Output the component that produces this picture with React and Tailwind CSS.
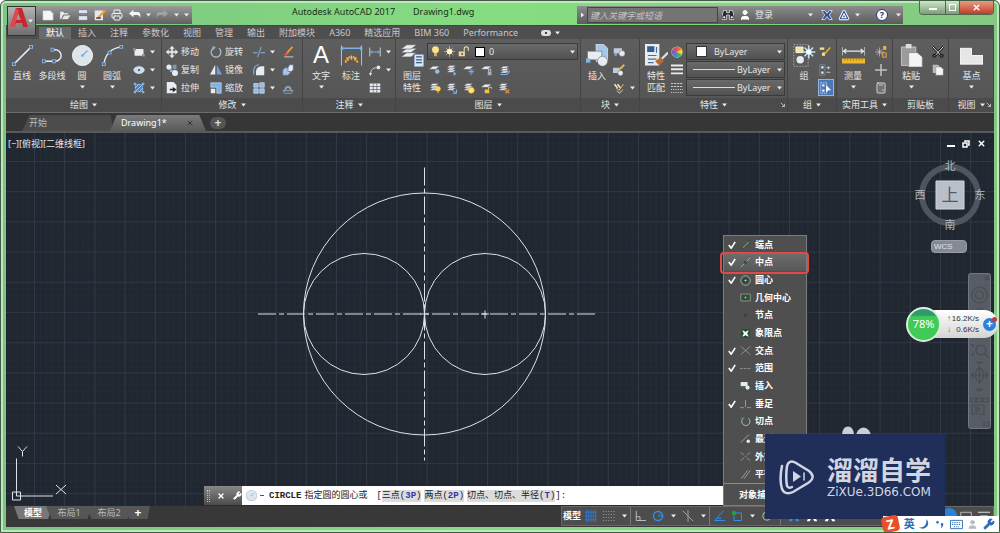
// src/App.jsx
import { Calculator, Printer, User, Wrench, X } from "lucide-react";

const RIBBON_TABS = [
  "默认", "插入", "注释", "参数化", "视图", "管理", "输出", "附加模块",
  "A360", "精选应用", "BIM 360", "Performance",
];

const SNAPS = [
  { label: "端点", icon: "end", on: true },
  { label: "中点", icon: "mid", on: true, hot: true },
  { label: "圆心", icon: "center", on: true },
  { label: "几何中心", icon: "geo" },
  { label: "节点", icon: "node" },
  { label: "象限点", icon: "quad" },
  { label: "交点", icon: "cross", on: true },
  { label: "范围", icon: "ext", on: true },
  { label: "插入", icon: "ins" },
  { label: "垂足", icon: "perp", on: true },
  { label: "切点", icon: "tan" },
  { label: "最近点", icon: "near" },
  { label: "外观交点", icon: "app" },
  { label: "平行线", icon: "par" },
];

const W = "#e8ecf0";
const B = "#7fb2ea";

// small white/blue sheet stack used by most of the layer icons
const sheets = (
  <g fill={W} stroke="#4a5058" strokeWidth=".5">
    <path d="M1 11l4-3h8l-4 3z" />
    <path d="M1 8l4-3h8L9 8z" />
    <path d="M1 5l4-3h8L9 5z" />
  </g>
);
const sheet = <path d="M0 7l5-4h9L9 7z" fill={W} stroke="#4a5058" strokeWidth=".5" />;

const glyphs = {
  // draw
  line: (
    <>
      <path d="M2 14L14 2" stroke={W} fill="none" />
      <path d="M1 13h2v2H1zM13 1h2v2h-2z" fill="#555" stroke={B} strokeWidth=".7" />
    </>
  ),
  pline: (
    <>
      <path d="M2 12h8a4 4 0 000-8H8" stroke={W} fill="none" />
      <path d="M1 11h2v2H1zM8 11h2v2H8zM7 3h2v2H7z" fill="#555" stroke={B} strokeWidth=".7" />
    </>
  ),
  circle: (
    <>
      <circle cx="8" cy="8" r="7" fill="#dfe4ea" stroke="#fff" strokeWidth=".6" />
      <path d="M8 8l3.500-3.500" stroke={B} />
      <circle cx="8" cy="8" r="1" fill={B} />
    </>
  ),
  arc: (
    <>
      <path d="M2 14C3 7 7 3 14 2" stroke={W} fill="none" />
      <path d="M1 13h2v2H1zM5 5h2v2H5zM13 1h2v2h-2z" fill="#555" stroke={B} strokeWidth=".7" />
    </>
  ),
  rect: (
    <>
      <rect x="2" y="4" width="12" height="9" rx="1" fill={W} />
      <path d="M0 3h4v3H0zM12 11h4v3h-4z" fill="#8a919b" />
    </>
  ),
  ellipse: (
    <>
      <ellipse cx="8" cy="8" rx="7" ry="4.500" fill="#cfdbea" stroke={W} />
      <circle cx="8" cy="8" r="1.500" fill="#2f5e9a" />
      <path d="M7 2h2v2H7zM0 7h2v2H0z" fill={B} />
    </>
  ),
  hatch: (
    <>
      <rect x="3" y="3" width="10" height="10" fill="#4d7fc0" stroke={B} />
      <path d="M3 8l5-5M3 13L13 3M8 13l5-5" stroke="#dbe8f7" />
      <path d="M1 1h3v3H1zM12 1h3v3h-3zM1 12h3v3H1zM12 12h3v3h-3z" fill={B} />
    </>
  ),
  // modify
  move: (
    <path
      d="M8 0l3 3.500H9V7h3.500V5L16 8l-3.500 3V9H9v3.500h2L8 16l-3-3.500h2V9H3.500v2L0 8l3.500-3v2H7V3.500H5z"
      fill={W}
      stroke={W}
      strokeWidth=".5"
    />
  ),
  rotate: (
    <>
      <path d="M5 2.500a6.500 6.500 0 107 .6" stroke="#aeb9c6" strokeWidth="1.800" fill="none" />
      <path d="M3 0l5 1.500-4 4z" fill={B} />
    </>
  ),
  trim: (
    <>
      <path d="M0 9h6M10 9h6" stroke={B} strokeWidth="1.500" />
      <path d="M11 1L6 15" stroke="#8fb0d8" strokeWidth="1.300" />
    </>
  ),
  erase: (
    <>
      <path d="M14 1L6 10" stroke="#f0a030" strokeWidth="2.500" />
      <path d="M7 8l-4 3 1 2 5-2z" fill="#e55" />
      <path d="M3 14.500h12" stroke={W} />
    </>
  ),
  copy: (
    <>
      <circle cx="4" cy="4" r="3.500" fill={W} />
      <path d="M9 1h5v6H9z" fill="#8296ad" />
      <circle cx="7" cy="9" r="2" fill={B} />
      <circle cx="12" cy="12" r="4" fill={W} />
    </>
  ),
  mirror: (
    <>
      <path d="M7 1v13H0z" fill={W} />
      <path d="M9 1v13h7z" fill="#6f9fd6" />
    </>
  ),
  fillet: (
    <>
      <path d="M4 15V10a7 7 0 017-7h4v12z" fill={W} />
      <path d="M1 14V8a7 7 0 017-7" stroke={B} strokeWidth="1.500" fill="none" />
    </>
  ),
  explode: (
    <>
      <path d="M1 8l3-3h7v7l-3 3H1z" fill="#a9c4e4" stroke="#54708f" />
      <path d="M8 5l2-4h5v6l-2 3H8z" fill={W} stroke="#54708f" />
    </>
  ),
  stretch: (
    <>
      <path d="M1 0h9l4 4v11H1z" fill={W} />
      <path d="M5 9h4V6.500L14 10l-5 3.500V11H5z" fill="#222" />
    </>
  ),
  scale: (
    <>
      <path d="M1 1h14v14H9V7H1z" fill={B} stroke={W} strokeWidth=".7" />
      <path d="M1 9h6v6H1z" fill={W} />
    </>
  ),
  array: (
    <path
      d="M1 2h6v5H1zM9 1h6v6H9zM1 9h6v6H1zM9 9h6v6H9z"
      fill="#8dbbf0"
      stroke={W}
      strokeWidth=".8"
    />
  ),
  offset: (
    <>
      <path d="M1 12h3v-2a4 4 0 118 0v2h3" stroke="#b4c4d8" strokeWidth="1.300" fill="none" />
      <path d="M2 15h12M6 12V9a2 2 0 014 0v3z" stroke={B} fill="none" />
    </>
  ),
  // annotate
  dim: (
    <>
      <path d="M1 1v14M15 1v14" stroke="#b9c0c8" strokeWidth=".7" />
      <path d="M1 3h14" stroke={B} />
      <path d="M2 1.500L0 3l2 1.500zM14 1.500L16 3l-2 1.500z" fill={B} />
      <path d="M4 13a4 4 0 018 0" stroke="#f0a030" strokeWidth="1.500" strokeDasharray="2 1.500" fill="none" />
      <path d="M8 8v3M4.500 9.500l1.500 2M11.500 9.500l-1.500 2" stroke="#f0c060" />
    </>
  ),
  linear: (
    <>
      <path d="M1 2v12M15 2v12" stroke={W} />
      <path d="M2 8h12M4 6L2 8l2 2M12 6l2 2-2 2" stroke={B} strokeWidth="1.300" fill="none" />
    </>
  ),
  leader: (
    <>
      <path d="M2 15c0-7 3-10 8-10" stroke={W} fill="none" />
      <circle cx="12.500" cy="4.500" r="2.500" fill={W} />
      <path d="M0 12l2 4 2-4z" fill={W} />
    </>
  ),
  table: (
    <>
      <path d="M1 2h14v12H1z" fill={W} />
      <path d="M1 6h14M1 10h14M5.700 2v12M10.400 2v12" stroke="#5d6670" />
    </>
  ),
  // layers
  layerprops: (
    <>
      <g fill={W} stroke="#555" strokeWidth=".4">
        <path d="M0 9l4-3h7l-4 3z" />
        <path d="M0 6l4-3h7L7 6z" />
        <path d="M0 3.500l4-3h7l-4 3z" />
      </g>
      <path d="M9 7h7v9H9z" fill="#d9e6f5" stroke="#39577c" strokeWidth=".6" />
      <path d="M10.500 9h4M10.500 11h4M10.500 13h4" stroke="#39577c" strokeWidth=".8" />
    </>
  ),
  layoff: <>{sheet}<circle cx="11" cy="10" r="3" fill="#9dbbe0" /></>,
  layiso: <>{sheets}<path d="M10 10l4 3-4 3z" fill={B} /></>,
  layfrz: <>{sheet}<path d="M11 6v9M7 10h8M8 7l6 6M14 7l-6 6" stroke={B} /></>,
  laylck: <>{sheet}<path d="M9 10h5v5H9z" fill="#9fb0c4" /><path d="M10 10V7h3v3" stroke={W} fill="none" /></>,
  laycur: <g transform="translate(2 1)">{sheets}<path d="M1 13h9l4-5" stroke={B} strokeWidth="1.500" fill="none" /></g>,
  layon: <>{sheets}<circle cx="12" cy="9" r="3.500" fill="#ffd257" /><path d="M11 12h2v3h-2z" fill="#c79a3a" /></>,
  layun: <>{sheets}<path d="M7 10l7 5M14 10v5H9" stroke={B} strokeWidth="1.300" fill="none" /></>,
  laythw: <>{sheets}<circle cx="11" cy="11" r="4" fill="#ffe27a" stroke="#e0a820" /></>,
  layulk: <>{sheet}<path d="M5 10h6v5H5z" fill="#f2c14a" /><path d="M10 10V7h4v2" stroke="#f2c14a" strokeWidth="1.300" fill="none" /></>,
  laymch: <>{sheets}<path d="M9 10l6 5M15 10l-5 5" stroke="#e08a3a" strokeWidth="2" /></>,
  bulb: <><circle cx="8" cy="5.500" r="5" fill="#ffe08a" /><path d="M6 10h4v5H6z" fill="#d7b25a" /></>,
  sun: (
    <>
      <path d="M8 0v16M0 8h16M2.500 2.500l11 11M13.500 2.500l-11 11" stroke="#d6c9a0" />
      <circle cx="8" cy="8" r="4" fill="#fff3c0" />
    </>
  ),
  unlock: (
    <>
      <path d="M1 8h9v7H1z" fill="#f3d890" />
      <path d="M9 8V4a3 3 0 016 0v3" stroke="#e8e0c8" strokeWidth="1.500" fill="none" />
      <path d="M5 10h2v3H5z" fill="#443" />
    </>
  ),
  // blocks and properties
  insert: (
    <>
      <path d="M7 0h5l3 3v9H7z" fill="#a8c6e8" stroke={W} strokeWidth=".5" />
      <path d="M1 5h10v6H1z" fill={W} stroke="#667" strokeWidth=".4" />
      <circle cx="11.500" cy="12" r="3.500" fill={W} stroke="#667" strokeWidth=".4" />
      <path d="M0 10h3v3H0z" fill={B} />
    </>
  ),
  mkblock: (
    <>
      <path d="M1 3h11v7H1z" fill="#c2ccd8" />
      <circle cx="12" cy="10" r="4" fill={W} stroke="#556" strokeWidth=".6" />
      <path d="M2 10h3v3H2z" fill={B} />
    </>
  ),
  edblock: (
    <>
      <path d="M0 5h9v7H0z" fill="#c2ccd8" />
      <circle cx="10" cy="12" r="3.500" fill={W} stroke="#556" strokeWidth=".6" />
      <path d="M15 1L9 7" stroke="#f0b030" strokeWidth="2.500" />
    </>
  ),
  attr: (
    <>
      <path d="M2 3l4 5M6 3l4 5" stroke={W} strokeWidth="2" />
      <path d="M14 3l-6 8-4-3" stroke="#e6a84a" strokeWidth="1.500" fill="none" />
      <path d="M5 12l4 3 4-5" stroke={W} fill="none" />
    </>
  ),
  match: (
    <>
      <path d="M0 0h10v15H0z" fill={W} />
      <path d="M1.500 1.500h5v4h-5z" fill="#2f5e9a" />
      <path d="M2 8h6M2 10.500h6M2 13h4M8 2v4" stroke="#4b6b93" strokeWidth=".8" />
      <path d="M16 6l-5 5" stroke="#ddd" strokeWidth="1.500" />
      <path d="M11 9l2 3-3 3-3-3z" fill="#b8692c" />
    </>
  ),
  wheel: (
    <>
      <circle cx="8" cy="8" r="7.500" fill="#f0d24a" />
      <path d="M8 8V1a7 7 0 016 3.500z" fill="#e86a3a" />
      <path d="M8 8L2 4.500A7 7 0 018 1z" fill="#d84a6a" />
      <path d="M8 8v7a7 7 0 01-6-3.500z" fill="#3a86d8" />
      <path d="M8 8l6 3.500A7 7 0 018 15z" fill="#43b05c" />
      <path d="M8 8L2 11.500a7 7 0 010-7z" fill="#7a58c8" />
    </>
  ),
  weights: <path d="M0 2h16M0 7h16M0 12.500h16" stroke={W} strokeWidth="2.500" />,
  ltypes: (
    <>
      <path d="M0 2h16M0 6h16" stroke={W} strokeDasharray="3 1" />
      <path d="M0 10h16M0 14h16" stroke={W} strokeDasharray="1.500 1.500" />
    </>
  ),
  // groups, utilities, clipboard
  group: (
    <>
      <path d="M.5 .5h10v15H.5z" stroke="#b8b8b8" strokeDasharray="1 1" strokeWidth=".6" fill="none" />
      <path d="M2 2h5v4H2z" fill="#f4e6a0" stroke="#fff" strokeWidth=".5" />
      <circle cx="5" cy="11" r="2.600" fill={W} />
      <path d="M11 1v9M6.500 5.500h9M8 2.500l6 6M14 2.500l-6 6" stroke="#c4e6ff" strokeWidth="1" />
      <circle cx="11" cy="5.500" r="1.800" fill="#fff" />
    </>
  ),
  ungroup: (
    <>
      <path d="M1 2h6v3H1zM4 9h4v4H4z" fill="#f4e6a0" />
      <path d="M15 2l-7 8-2-2" stroke="#f0b030" strokeWidth="2" fill="none" />
    </>
  ),
  grpedit: (
    <>
      <path d="M1 1h7v14H1z" stroke="#7a9cc8" fill="none" strokeWidth=".8" />
      <path d="M3 3h3v3H3zM3 10h3v3H3z" fill={W} />
      <path d="M10 5h5M10 11h5M12.500 3v4" stroke={W} />
    </>
  ),
  grpsel: (
    <>
      <path d="M1 1h8v14H1z" stroke="#cfe0f5" fill="none" strokeDasharray="2 1" />
      <path d="M3 3h3v3H3zM3 10h3v3H3z" fill={W} />
      <path d="M8 4l7 7h-4l-3 3z" fill="#fff" />
    </>
  ),
  measure: (
    <>
      <path d="M0 2v6M16 2v6" stroke={W} strokeWidth=".8" />
      <path d="M1 5h14M3 3.500L1 5l2 1.500M13 3.500L15 5l-2 1.500" stroke={W} strokeWidth=".8" fill="none" />
      <path d="M0 10h16v3.500H0z" fill="#f0b92c" />
      <path d="M2 10v1.500M4 10v1.500M6 10v1.500M8 10v1.500M10 10v1.500M12 10v1.500M14 10v1.500" stroke="#8a6410" strokeWidth=".5" />
    </>
  ),
  qselect: (
    <>
      <path d="M6 2v12M0 8h12M2 4l8 8M10 4l-8 8" stroke="#d9d9d9" strokeWidth=".8" />
      <path d="M11 0h4v5h-4z" fill="#f0b94a" />
      <path d="M10 9h5v6h-5z" stroke="#f0b94a" fill="#776a50" />
    </>
  ),
  point: <path d="M8 0v16M0 8h16" stroke="#bcc4cc" strokeWidth="2" />,
  paste: (
    <>
      <path d="M1 2h10v13H1z" fill="#9b9b9b" stroke="#ddd" strokeWidth=".5" />
      <path d="M4 0h4v3H4z" fill="#ddd" />
      <path d="M6 6h6l3.500 3v7H6z" fill="#f4f4f4" stroke="#777" strokeWidth=".4" />
    </>
  ),
  cut: (
    <>
      <path d="M1 1l12 13M15 1L3 14" stroke="#111" strokeWidth="3" />
      <path d="M1 1l12 13M15 1L3 14" stroke="#eee" strokeWidth="1.300" />
      <circle cx="3" cy="13" r="2" stroke="#111" fill="none" strokeWidth="1.300" />
      <circle cx="13" cy="13" r="2" stroke="#111" fill="none" strokeWidth="1.300" />
    </>
  ),
  copyclip: (
    <>
      <path d="M1 1h7l2 2v9H1z" fill="#bbb" />
      <path d="M5 4h7l3 3v8H5z" fill="#f4f4f4" stroke="#666" strokeWidth=".5" />
    </>
  ),
  base: <path d="M0 3h8v5h8v6H0z" fill="#e6e6e6" stroke="#fff" strokeWidth=".6" />,
  // quick access
  new: <path d="M1 2h10l4 4v9H1z" fill="#f4f6f8" stroke="#888" strokeWidth=".5" />,
  open: <path d="M1 14V3h5l1 2h6v3H6l-3 6zM3 14l4-6h9l-4 6z" fill="#e8e8e8" stroke="#555" strokeWidth=".6" />,
  save: <path d="M2 1h12v5H2zM2 9h12v6H2zM4 7h8v1H4z" fill="#dfe6ee" stroke="#445" strokeWidth=".5" />,
  saveas: (
    <>
      <path d="M1 2h11v13H1z" fill="#e4e8ee" />
      <path d="M15 2L6 11" stroke="#f0a030" strokeWidth="3" />
      <path d="M3 11h6v2H3z" fill="#335" />
    </>
  ),
  undo: <path d="M0 6l6-5v3h5c3 0 5 2 4 8-1-3-2-4-4-4H6v3z" fill="#f4f4f4" />,
  redo: <path d="M16 6l-6-5v3H5c-3 0-5 2-4 8 1-3 2-4 4-4h5v3z" fill="#a2a2a2" />,
  binoc: (
    <>
      <path d="M2 2h4v3h4V2h4l2 8v4h-6V8H6v6H0v-4z" fill="#24282e" stroke="#fff" strokeWidth=".8" />
      <circle cx="3" cy="11" r="1.500" fill="#fff" />
      <circle cx="13" cy="11" r="1.500" fill="#fff" />
    </>
  ),
  exchange: <path d="M1 2h4l3 4 3-4h4l-4 6 4 6h-4l-3-4-3 4H1l4-6z" fill="#2c4fa0" stroke="#fff" strokeWidth=".9" />,
  a360: (
    <>
      <path d="M8 3l5 10H3z" stroke="#fff" strokeWidth="4" strokeLinejoin="round" />
      <path d="M8 3l5 10H3z" stroke="#2c4fa0" strokeWidth="1.500" />
    </>
  ),
  // object snap menu
  end: <><path d="M4 13L14 3" stroke="#b5c5b8" /><path d="M1 12h3v3H1zM12 1h3v3h-3z" fill="#1f5a30" /></>,
  mid: <><path d="M1 15L15 1" stroke="#b5c5b8" /><path d="M6 6h4v4H6z" fill="#1f5a30" /></>,
  center: (
    <>
      <circle cx="8" cy="8" r="7" stroke="#c0c6ba" fill="none" />
      <circle cx="8" cy="8" r="4" fill="#1f4a2c" />
      <path d="M6 8h4M8 6v4" stroke="#d8e8d8" strokeWidth=".8" />
    </>
  ),
  geo: (
    <>
      <path d="M1 3h14v10H1z" stroke="#9fb0a0" fill="#3d4a40" />
      <circle cx="8" cy="8" r="3" fill="#16502a" />
      <path d="M8 6v4M6 8h4" stroke="#b8d8b8" strokeWidth=".8" />
    </>
  ),
  node: <circle cx="8" cy="8" r="1.800" fill="#2e5a3c" stroke="#1e4028" />,
  quad: (
    <>
      <path d="M2 2h12v12H2z" fill="#1c4a2c" />
      <path d="M4 4l4 2 4-2-2 4 2 4-4-2-4 2 2-4z" fill="#fff" stroke="#fff" />
    </>
  ),
  cross: <path d="M1 2l14 12M15 2L1 14" stroke="#9fb5a2" />,
  ext: <path d="M0 8h16" stroke="#9fb5a2" strokeDasharray="4 1.500" />,
  ins: <><path d="M1 3h10v6H1z" fill={W} /><circle cx="11" cy="11" r="3" fill={W} /><path d="M3 9h3v3H3z" fill="#2e7a44" /></>,
  perp: <><path d="M0 14h6M10 14h6" stroke="#5cc074" strokeWidth="1.300" /><path d="M8 3v10" stroke="#b5c5b8" /></>,
  tan: <><path d="M5 3a6 6 0 107 0" stroke="#b5c5b8" strokeWidth="1.300" fill="none" /><path d="M1 3h6" stroke="#4ca862" /></>,
  near: <><path d="M1 14L13 2" stroke="#b5c5b8" /><circle cx="12" cy="12" r="2.500" fill={W} /></>,
  app: <><path d="M1 2l5 4M15 2l-5 4M1 14l5-4M15 14l-5-4" stroke="#9fb5a2" /><path d="M7 7h2v2H7z" fill="#4ca862" /></>,
  par: <path d="M2 14L11 2M6 14l9-12" stroke="#b5c5b8" />,
  // status bar
  grid: <path d="M2 0v16M5 0v16M8 0v16M11 0v16M14 0v16M0 3h16M0 8h16M0 13h16" stroke="#2f7fe0" />,
  dots: <path d="M0 2h16M0 6h16M0 10h16M0 14h16" stroke="#aaa" strokeDasharray="1.500 2" />,
  ortho: <path d="M3 1v13h13M3 9h5v5" stroke="#ddd" fill="none" />,
  polar: <><circle cx="8" cy="8" r="6" stroke="#2f8ff0" strokeWidth="1.800" fill="none" /><path d="M8 8h8M8 8l5-5" stroke="#2f8ff0" /></>,
  iso: <path d="M1 1l14 14M8 0v16" stroke="#bbb" />,
  track: <path d="M14 1L2 14h14M5 11h6" stroke="#2f8ff0" strokeWidth="1.300" fill="none" />,
  osnap: <><path d="M4 4h10v10H4z" stroke="#2f8ff0" strokeWidth="1.300" fill="none" /><circle cx="4" cy="4" r="3" fill="#2a9a4a" /></>,
  gear: <><circle cx="8" cy="8" r="5.500" stroke="#a7b49a" strokeWidth="1.500" fill="none" /><circle cx="8" cy="8" r="1.500" fill="#a7b49a" /></>,
  person: <path d="M8 1l3 6 4 8h-4L8 9l-3 6H1l4-8z" fill="currentColor" />,
  panel: <><path d="M1 3h14v10H1z" stroke="#ddd" fill="none" /><path d="M9 8h5v4H9z" fill="#ddd" /></>,
  lines: <path d="M0 3h16M3 8h10M3 12h10" stroke="#ddd" strokeWidth="1.500" />,
  expand: <path d="M2 2l9 9M12 5v7H5" stroke="#ddd" strokeWidth="2" fill="none" />,
};

function Glyph({ name, className = "size-3" }) {
  return (
    <svg viewBox="0 0 16 16" className={`shrink-0 ${className}`} fill="none" aria-hidden="true">
      {glyphs[name]}
    </svg>
  );
}

function Caret({ className = "" }) {
  return (
    <svg viewBox="0 0 8 5" className={`h-1 w-[5px] shrink-0 ${className}`} aria-hidden="true">
      <path d="M0 0h8L4 5z" fill="#eee" />
    </svg>
  );
}

function Panel({ title, className, children, caret = true, launcher = false }) {
  return (
    <section className={`flex flex-col border-r border-[#444] ${className}`}>
      <div className="flex flex-1 pl-px">{children}</div>
      <h2 className="relative flex h-[14px] items-center justify-center gap-1 bg-[#4b4b4b] whitespace-nowrap">
        {title}
        {caret && <Caret />}
        {launcher && <Glyph name="expand" className="absolute right-px size-[6px]" />}
      </h2>
    </section>
  );
}

function BigButton({ icon, label, sub, caret, children }) {
  return (
    <button type="button" className="flex w-[30px] shrink-0 flex-col items-center pt-[5px] leading-3 whitespace-nowrap">
      {children || <Glyph name={icon} className="size-[23px]" />}
      <span className="mt-[3px]">{label}</span>
      {sub && <span>{sub}</span>}
      {caret && <Caret className="mt-[3px]" />}
    </button>
  );
}

function SmallButton({ icon, label, caret, active }) {
  return (
    <button
      type="button"
      title={label || icon}
      className={`flex h-[17px] items-center gap-[3px] whitespace-nowrap ${active ? "-ml-px border border-[#8fb5e8] bg-[#4a78b8] px-px" : ""}`}
    >
      <Glyph name={icon} />
      {label}
      {caret && <Caret className="ml-[2px]" />}
    </button>
  );
}

function Stack({ items, className = "" }) {
  return (
    <div className={`flex flex-col gap-px pt-1 ${className}`}>
      {items.map((it) => (
        <SmallButton key={it.icon} {...it} />
      ))}
    </div>
  );
}

function Combo({ label, options, className = "", children }) {
  return (
    <label className="relative flex h-[17px] items-center border border-[#3a3a3a] bg-linear-to-b from-[#6a6a6a] to-[#525252]">
      <span className="sr-only">{label}</span>
      {children}
      <select className={`h-[15px] min-w-0 flex-1 appearance-none bg-transparent pr-2 leading-[15px] outline-none ${className}`}>
        {options.map((o) => (
          <option key={o}>{o}</option>
        ))}
      </select>
      <Caret className="absolute right-[2px]" />
    </label>
  );
}

function TitleBar() {
  return (
    <header className="flex h-6 shrink-0 items-start pl-[30px]">
      <nav className="mt-[5px] flex h-[18px] w-[156px] items-center justify-between bg-linear-to-b from-[#9a9a9a] to-[#616161] pr-[3px] pl-[6px]">
        <button type="button" aria-label="新建"><Glyph name="new" /></button>
        <button type="button" aria-label="打开"><Glyph name="open" /></button>
        <button type="button" aria-label="保存"><Glyph name="save" /></button>
        <button type="button" aria-label="另存为"><Glyph name="saveas" /></button>
        <button type="button" aria-label="打印"><Printer size={12} color="#f4f4f4" /></button>
        <button type="button" aria-label="放弃"><Glyph name="undo" /></button>
        <Caret />
        <button type="button" aria-label="重做"><Glyph name="redo" /></button>
        <Caret />
        <Caret />
      </nav>
      <h1 className="flex h-[22px] flex-1 items-center gap-[18px] pl-[100px] whitespace-nowrap text-[#173017]">
        <span>Autodesk AutoCAD 2017</span>
        <span>Drawing1.dwg</span>
      </h1>
      <div className="mt-[5px] mr-4 flex h-[18px] w-[326px] items-center bg-linear-to-b from-[#8c8c8c] to-[#5c5c5c]">
        <button type="button" aria-label="展开" className="flex w-[10px] justify-center">
          <Caret className="-rotate-90" />
        </button>
        <input
          type="text"
          aria-label="搜索"
          placeholder="键入关键字或短语"
          className="h-4 w-[131px] border border-[#444] bg-[#747474] px-[2px] italic outline-none placeholder:text-[#c4c4c4]"
        />
        <button type="button" aria-label="查找" className="ml-1"><Glyph name="binoc" /></button>
        <button type="button" className="ml-[5px] flex items-center gap-1">
          <User size={12} fill="#fff" color="#fff" />
          登录
        </button>
        <Caret className="ml-auto" />
        <button type="button" aria-label="Exchange" className="ml-2"><Glyph name="exchange" /></button>
        <button type="button" aria-label="A360" className="mx-[5px]"><Glyph name="a360" /></button>
        <Caret />
        <button
          type="button"
          aria-label="帮助"
          className="mr-2 ml-4 size-3 rounded-full border border-[#223a70] bg-white text-center leading-[10px] font-bold text-[#223a70]"
        >
          ?
        </button>
        <Caret className="mr-[2px]" />
      </div>
      <div className="flex h-[14px] w-[75px] overflow-hidden rounded-b border border-t-0 border-[#4d6a4d] text-white">
        <button type="button" aria-label="最小化" className="flex w-[26px] items-end justify-center border-r border-[#4d6a4d] bg-linear-to-b from-[#cfe6cb] to-[#7d9c7a] pb-1">
          <span className="h-[2px] w-2 bg-white" />
        </button>
        <button type="button" aria-label="还原" className="flex w-[14px] items-center justify-center border-r border-[#4d6a4d] bg-linear-to-b from-[#cfe6cb] to-[#7d9c7a]">
          <span className="size-[7px] border border-white" />
        </button>
        <button type="button" aria-label="关闭" className="flex flex-1 items-center justify-center bg-linear-to-b from-[#e59a86] to-[#bf3a22]">
          <X size={9} strokeWidth={4} />
        </button>
      </div>
    </header>
  );
}

function Ribbon() {
  return (
    <div className="flex h-[74px] shrink-0 border-b border-[#6c6c6c] bg-linear-to-b from-[#5e5e5e] to-[#545454]">
      <Panel title="绘图" className="w-[156px]">
        <BigButton icon="line" label="直线" />
        <BigButton icon="pline" label="多段线" />
        <BigButton icon="circle" label="圆" caret />
        <BigButton icon="arc" label="圆弧" caret />
        <Stack
          className="pl-[6px]"
          items={[
            { icon: "rect", caret: true },
            { icon: "ellipse", caret: true },
            { icon: "hatch", caret: true },
          ]}
        />
      </Panel>
      <Panel title="修改" className="w-[141px]">
        <Stack
          className="w-[44px] pl-[3px]"
          items={[
            { icon: "move", label: "移动" },
            { icon: "copy", label: "复制" },
            { icon: "stretch", label: "拉伸" },
          ]}
        />
        <Stack
          className="w-[44px] pl-[3px]"
          items={[
            { icon: "rotate", label: "旋转" },
            { icon: "mirror", label: "镜像" },
            { icon: "scale", label: "缩放" },
          ]}
        />
        <Stack
          className="w-[30px] pl-[2px]"
          items={[
            { icon: "trim", caret: true },
            { icon: "fillet", caret: true },
            { icon: "array", caret: true },
          ]}
        />
        <Stack className="pl-px" items={[{ icon: "erase" }, { icon: "explode" }, { icon: "offset" }]} />
      </Panel>
      <Panel title="注释" className="w-[93px]">
        <span className="w-[2px]" />
        <BigButton label="文字" caret>
          <span className="h-[23px] font-['Liberation_Sans',sans-serif] text-[24px] leading-[22px] text-white">A</span>
        </BigButton>
        <BigButton icon="dim" label="标注" />
        <Stack
          className="pl-[3px]"
          items={[{ icon: "linear", caret: true }, { icon: "leader", caret: true }, { icon: "table" }]}
        />
      </Panel>
      <Panel title="图层" className="w-[185px]">
        <BigButton icon="layerprops" label="图层" sub="特性" />
        <div className="flex flex-1 flex-col gap-px pt-1 pr-[2px]">
          <Combo label="当前图层" options={["0"]} className="pl-1">
            <span className="flex items-center gap-[3px] pl-[2px]">
              <Glyph name="bulb" className="size-[11px]" />
              <Glyph name="sun" className="size-[11px]" />
              <Glyph name="unlock" className="size-[11px]" />
              <span className="ml-[3px] size-[10px] border border-black bg-white" />
            </span>
          </Combo>
          <div className="grid w-[88px] grid-cols-5 gap-y-px pl-[2px]">
            {["layoff", "layiso", "layfrz", "laylck", "laycur", "layon", "layun", "laythw", "layulk", "laymch"].map((n) => (
              <SmallButton key={n} icon={n} />
            ))}
          </div>
        </div>
      </Panel>
      <Panel title="块" className="w-[59px]">
        <BigButton icon="insert" label="插入" />
        <Stack className="pl-px" items={[{ icon: "mkblock" }, { icon: "edblock" }, { icon: "attr", caret: true }]} />
      </Panel>
      <Panel title="特性" className="w-[148px]" launcher>
        <BigButton icon="match" label="特性" sub="匹配" />
        <Stack className="w-[15px]" items={[{ icon: "wheel" }, { icon: "weights" }, { icon: "ltypes" }]} />
        <div className="flex flex-1 flex-col gap-px pt-1 pr-[2px]">
          <Combo label="对象颜色" options={["ByLayer"]} className="pl-[7px]">
            <span className="ml-[9px] size-[11px] border border-[#333] bg-white" />
          </Combo>
          <Combo label="线宽" options={["ByLayer"]} className="pl-[2px]">
            <span className="ml-[6px] h-px w-[42px] bg-[#ddd]" />
          </Combo>
          <Combo label="线型" options={["ByLayer"]} className="pl-[2px]">
            <span className="ml-[6px] h-px w-[42px] bg-[#ddd]" />
          </Combo>
        </div>
      </Panel>
      <Panel title="组" className="w-[49px]">
        <BigButton icon="group" label="组" />
        <Stack items={[{ icon: "ungroup" }, { icon: "grpedit" }, { icon: "grpsel", active: true }]} />
      </Panel>
      <Panel title="实用工具" className="w-[56px]">
        <BigButton icon="measure" label="测量" caret />
        <div className="flex flex-col gap-px pt-1 pl-[7px]">
          <SmallButton icon="qselect" />
          <SmallButton icon="point" />
          <button type="button" aria-label="计算器" className="flex h-[17px] items-center">
            <Calculator size={12} color="#ddd" />
          </button>
        </div>
      </Panel>
      <Panel title="剪贴板" className="w-[56px]" caret={false}>
        <span className="w-[2px]" />
        <BigButton icon="paste" label="粘贴" caret />
        <Stack className="pl-[6px]" items={[{ icon: "cut" }, { icon: "copyclip" }]} />
      </Panel>
      <Panel title="视图" className="flex-1" launcher>
        <div className="flex flex-1 justify-center">
          <BigButton icon="base" label="基点" caret />
        </div>
      </Panel>
    </div>
  );
}

function FileTabs() {
  return (
    <div className="flex h-5 shrink-0 items-end border-b-2 border-[#5a5a5a] bg-[#363636] pl-4 text-[#bbb]">
      <button type="button" className="h-4 w-[92px] bg-[#4c4c4c] pl-[7px] text-left [clip-path:polygon(0_100%,8%_0,96%_0,100%_100%)]">
        开始
      </button>
      <button
        type="button"
        className="-ml-1 flex h-4 w-[96px] items-center justify-between bg-linear-to-b from-[#7a7a7a] to-[#5a5a5a] pr-3 pl-[11px] text-white [clip-path:polygon(0_100%,7%_0,93%_0,100%_100%)]"
      >
        Drawing1*
        <X size={8} strokeWidth={3} color="#333" />
      </button>
      <button type="button" aria-label="新图形" className="mb-[2px] ml-1 h-3 w-4 rounded-md bg-[#555] text-[12px] leading-3 font-bold text-[#ddd]">
        +
      </button>
    </div>
  );
}

function ViewCube() {
  return (
    <svg viewBox="0 0 74 76" className="absolute top-[24px] right-[7px] h-[76px] w-[74px]" fontSize="11" fill="#b4b8be" textAnchor="middle">
      <circle cx="37" cy="38" r="28" stroke="#4e555f" strokeWidth="6" fill="none" />
      <text x="37" y="13">北</text>
      <text x="7" y="42">西</text>
      <text x="67" y="42">东</text>
      <text x="37" y="72">南</text>
      <path d="M23 24h28v28H23z" fill="#b9bec8" stroke="#d3d7de" />
      <text x="37" y="44" fontSize="17" fill="#50586a">上</text>
    </svg>
  );
}

function NavBar() {
  return (
    <svg viewBox="0 0 23 156" className="absolute top-[140px] right-[3px] h-[156px] w-[23px]" fill="none" stroke="#484d55" strokeWidth="1.200">
      <rect x=".5" y=".5" width="22" height="155" rx="2" fill="#62666d" fillOpacity=".85" stroke="#727780" strokeWidth="1" />
      <path d="M17 3l4 4M21 3l-4 4" />
      <circle cx="11.500" cy="22" r="8" />
      <circle cx="11.500" cy="22" r="4" />
      <path d="M9 36h5l-2.500 2z" />
      <circle cx="13" cy="77" r="5" />
      <path d="M17 81l4 4M3 71l3 3M3 83l3-3" />
      <path d="M9 89h5l-2.500 2z" />
      <path d="M11.500 93v18M4 102h15M6 99l-3 3 3 3M17 99l3 3-3 3" />
      <ellipse cx="11.500" cy="102" rx="4" ry="7" />
      <path d="M9 116h5l-2.500 2z" />
      <path d="M3 125h5v4H3zM9 125h5v4H9zM15 125h5v4h-5zM4 132h12v9H4zM8 134l4 2.500-4 2.500z" />
      <path d="M16 149h5v4h-5z" />
    </svg>
  );
}

function Drawing() {
  return (
    <svg
      viewBox="6 132 988 374"
      preserveAspectRatio="xMidYMid slice"
      className="absolute inset-0 h-full w-full"
      fill="none"
      stroke="#dfe2e6"
    >
      <defs>
        <pattern id="minor" x="3.800" y="160.500" width="6.040" height="6.040" patternUnits="userSpaceOnUse">
          <path d="M0 0V6.040M0 0H6.040" stroke="#252d37" strokeWidth="1" />
        </pattern>
        <pattern id="major" x="3.800" y="160.500" width="30.200" height="30.200" patternUnits="userSpaceOnUse">
          <path d="M0 0V30.200M0 0H30.200" stroke="#333c48" strokeWidth="1.600" />
        </pattern>
      </defs>
      <rect x="0" y="120" width="1000" height="400" fill="#202730" stroke="none" />
      <rect x="0" y="120" width="1000" height="400" fill="url(#minor)" stroke="none" />
      <rect x="0" y="120" width="1000" height="400" fill="url(#major)" stroke="none" />
      <circle cx="424.500" cy="313.500" r="121" />
      <circle cx="364" cy="313.500" r="60.500" />
      <circle cx="485" cy="313.500" r="60.500" />
      <path d="M258 313.500H595M424.500 167V460" strokeDasharray="18 3 5 3" />
      <path d="M481 313.500h8M485 310v8M420 313.500h9M424.500 309v9" />
      {/* UCS icon */}
      <path d="M16.500 458V490M21 495.500H53M12.500 491.500h8v8h-8zM16.500 490v5.500H21" />
      <path d="M18 446l4.500 5 4.500-5M22.500 451v5M56 484.500l10 9M66 484.500l-10 9" />
      <g fill="#c9ced8" stroke="none">
        <ellipse cx="848" cy="434" rx="6" ry="8" />
        <ellipse cx="863.500" cy="436" rx="7.500" ry="9" />
      </g>
    </svg>
  );
}

function CommandLine() {
  const option = "bg-[#dcdcdc]";
  return (
    <div className="absolute right-[271px] bottom-px left-[198px] flex h-[19px] items-center bg-white font-['Liberation_Mono','Noto_Sans_CJK_SC',monospace] text-[#222]">
      <div className="flex h-full w-[38px] items-center gap-2 bg-linear-to-b from-[#888] to-[#4c4c4c] pl-[3px] text-white">
        <span className="h-3 w-[3px] border-x border-dotted border-[#bbb]" />
        <button type="button" aria-label="关闭命令行" className="-ml-px"><X size={8} strokeWidth={4} /></button>
        <button type="button" aria-label="自定义"><Wrench size={9} fill="#fff" /></button>
      </div>
      <Glyph name="circle" className="ml-1 size-[11px] rounded-full bg-[#9fb4d0]" />
      <span className="ml-[3px] h-px w-1 bg-[#555]" />
      <label htmlFor="cmd" className="ml-[5px] flex gap-[3px] leading-3 whitespace-nowrap">
        <b>CIRCLE</b>
        <span>指定圆的圆心或</span>
        <span className="ml-[6px]">[</span>
        <span className={`-ml-[3px] ${option}`}>三点(<b className="text-[#2f35a8]">3P</b>)</span>
        <span className={option}>两点(<b className="text-[#2f35a8]">2P</b>)</span>
        <span className={option}>切点、切点、半径(<b className="text-[#2f35a8]">T</b>)</span>
        <span className="-ml-[3px]">]:</span>
      </label>
      <input id="cmd" type="text" className="h-full min-w-0 flex-1 bg-transparent px-1 outline-none" />
    </div>
  );
}

function SnapMenu() {
  return (
    <div className="absolute right-[192px] bottom-[26px] flex h-[271px] w-[84px] flex-col border border-[#7c7c7c] bg-[#4f4f4f] font-bold text-white">
      <ul className="grid h-[247px] auto-rows-fr">
        {SNAPS.map((s) => (
          <li key={s.icon} className={s.hot ? "bg-linear-to-b from-[#6c6c6c] to-[#585858]" : ""}>
            <label className="flex h-full items-center leading-3 whitespace-nowrap">
              <input type="checkbox" defaultChecked={!!s.on} className="peer sr-only" />
              <svg viewBox="0 0 10 10" className="mr-1 ml-1 size-2 opacity-0 peer-checked:opacity-100" fill="none" stroke="#fff" strokeWidth="2">
                <path d="M1 5l3 4 5-8" />
              </svg>
              <Glyph name={s.icon} className="mr-1 size-[11px]" />
              {s.label}
            </label>
          </li>
        ))}
      </ul>
      <button type="button" className="flex-1 overflow-hidden border-t border-[#8a8a8a] pl-[15px] text-left whitespace-nowrap">
        对象捕捉设置...
      </button>
      <span className="absolute top-4 right-[-3px] left-[-4px] h-[22px] rounded-sm border-2 border-[#e04a46]" />
    </div>
  );
}

function NetMeter() {
  return (
    <div className="absolute right-px bottom-[190px] flex h-[36px] w-[92px] items-center text-[#333]">
      <div className="absolute inset-y-1 right-0 left-4 rounded-full bg-linear-to-b from-white to-[#d4d4d4]" />
      <div className="relative flex size-[35px] shrink-0 items-center justify-center rounded-full border-2 border-[#d9f0df] bg-linear-to-b from-[#2f9a6c] from-20% to-[#3fcb55] to-25% text-[11px] text-white">
        78%
      </div>
      <dl className="relative ml-1 grid w-[34px] grid-cols-[6px_1fr] text-right font-['Liberation_Sans',sans-serif] text-[8px] leading-[11px] whitespace-nowrap">
        <dt className="font-bold text-[#d04040]">↑</dt>
        <dd>16.2K/s</dd>
        <dt className="font-bold text-[#2f8a4a]">↓</dt>
        <dd>0.6K/s</dd>
      </dl>
      <button type="button" aria-label="加速" className="relative ml-1 flex size-[13px] shrink-0 items-center justify-center rounded-full bg-[#2f7fd8] text-[12px] leading-3 font-bold text-white">
        +
        <span className="absolute -top-px -right-px size-[5px] rounded-full bg-[#c8324a]" />
      </button>
    </div>
  );
}

function StatusButton({ icon, caret, color = "" }) {
  return (
    <button type="button" aria-label={icon} className={`flex shrink-0 items-center justify-center ${caret ? "w-3" : "w-[18px]"} ${color}`}>
      {caret ? <Caret /> : <Glyph name={icon} />}
    </button>
  );
}

function StatusBar() {
  const layout = "-ml-[6px] h-[13px] bg-[#565656] [clip-path:polygon(0_0,100%_0,90%_100%,12%_100%)]";
  return (
    <footer className="flex h-[21px] shrink-0 items-start bg-[#383838] pl-2 text-[#bbb]">
      <button type="button" className="h-[13px] w-[38px] bg-[#777] font-bold text-white [clip-path:polygon(0_0,100%_0,90%_100%,12%_100%)]">模型</button>
      <button type="button" className={`w-[46px] ${layout}`}>布局1</button>
      <button type="button" className={`w-[46px] ${layout}`}>布局2</button>
      <button type="button" aria-label="新建布局" className={`w-[24px] text-[12px] leading-3 font-bold text-white ${layout}`}>+</button>
      <div className="ml-auto flex h-5 w-[433px] items-center border border-[#686868] bg-[#4d4d4d] text-white">
        <button type="button" className="w-[20px] font-bold whitespace-nowrap">模型</button>
        <StatusButton icon="grid" />
        <StatusButton icon="dots" />
        <StatusButton icon="栅格设置" caret />
        <span className="h-full w-px bg-[#777]" />
        <StatusButton icon="ortho" />
        <StatusButton icon="polar" />
        <StatusButton icon="极轴设置" caret />
        <StatusButton icon="iso" />
        <StatusButton icon="等轴测设置" caret />
        <span className="h-full w-px bg-[#777]" />
        <StatusButton icon="track" />
        <StatusButton icon="osnap" />
        <StatusButton icon="捕捉设置" caret />
        <StatusButton icon="gear" />
        <span className="mx-1 h-full w-px bg-[#777]" />
        <StatusButton icon="person" color="text-[#2f8ff0]" />
        <StatusButton icon="person" />
        <StatusButton icon="person" />
        <span className="ml-auto size-4 rounded-full bg-[#2f7fd8]" />
        <StatusButton icon="panel" />
        <StatusButton icon="lines" />
      </div>
    </footer>
  );
}

function Watermark() {
  return (
    <div className="absolute right-[54px] bottom-[13px] flex h-[85px] w-[180px] items-center bg-[#202e5a] text-[#d2d6e2]">
      <svg viewBox="0 0 36 38" className="ml-[14px] h-[38px] w-[36px]" fill="none" stroke="#d2d6e2" strokeWidth="2.500" strokeLinecap="round">
        <path d="M3 8C1 17 1 24 3 31C5 36 10 36 14 34L29 25C35 21 35 17 30 13L17 5C12 2 9 4 8 8C7 15 7 22 8 28C9 30 11 30 13 29" />
        <path d="M14 13v11l8-5.500z" fill="#d2d6e2" stroke="none" />
        <path d="M25 15v7" strokeWidth="1.500" />
      </svg>
      <div className="ml-3 whitespace-nowrap">
        <p className="text-[26px] leading-[30px] font-bold">溜溜自学</p>
        <p className="font-['DejaVu_Sans',sans-serif] text-[12px] leading-[14px]">ZiXUe.3D66.COM</p>
      </div>
    </div>
  );
}

function ImeBar() {
  return (
    <div className="absolute right-0 bottom-0 flex h-4 w-[116px] items-center justify-between bg-white pr-1 text-[#2a6cb4]">
      <span className="-ml-px flex h-4 w-[17px] -rotate-12 items-center justify-center rounded-sm bg-[#e8502a] text-[13px] leading-4 font-bold text-white">Z</span>
      <span className="text-[11px] leading-4 font-bold">英</span>
      <svg viewBox="0 0 12 12" className="size-[11px]"><path d="M8 0a6 6 0 11-8 9c5 1 9-3 8-9z" fill="#2a6cb4" /></svg>
      <svg viewBox="0 0 10 12" className="size-[10px]" fill="#2a6cb4"><circle cx="2" cy="4" r="1.500" /><path d="M6 5h3c0 3-1 5-3 6 1-2 1-3 0-4z" /></svg>
      <svg viewBox="0 0 14 12" className="h-[11px] w-[13px]" fill="none" stroke="#2a6cb4">
        <path d="M.5 1.500h13v9H.5z" />
        <path d="M2 4h10M2 6h10M4 8.500h6" strokeDasharray="1.500 1" />
      </svg>
      <User size={11} fill="#b4bac4" color="#b4bac4" />
      <Wrench size={12} fill="#2a6cb4" />
    </div>
  );
}

export default function App() {
  return (
    <div className="relative flex h-screen w-full flex-col overflow-hidden rounded-t-md border border-[#3f5f45] bg-linear-to-r from-[#7cc482] via-[#86dd80] to-[#84c983] px-[5px] pb-[5px] font-['Noto_Sans','Noto_Sans_CJK_SC',sans-serif] text-[9px] leading-3 text-[#e6e6e6] shadow-[inset_0_0_0_2px_#bfe6bd]">
      <TitleBar />
      <nav className="flex h-[14px] shrink-0 items-end border-t border-[#444] bg-[#4e4e4e] pl-[33px]">
        {RIBBON_TABS.map((t, i) => (
          <button
            key={t}
            type="button"
            className={`h-3 px-[7px] whitespace-nowrap ${i === 0 ? "bg-[#6a6a6a] text-white" : "text-[#c8c8c8]"}`}
          >
            {t}
          </button>
        ))}
        <button type="button" aria-label="最小化功能区" className="ml-4 flex h-3 items-center gap-1">
          <span className="flex h-[6px] w-[10px] items-center justify-center rounded-sm bg-[#ddd]">
            <span className="size-[2px] bg-[#444]" />
          </span>
          <Caret />
        </button>
      </nav>
      <Ribbon />
      <FileTabs />
      <main className="relative min-h-0 flex-1 overflow-hidden bg-[#202730]">
        <Drawing />
        <div className="absolute top-[5px] left-[2px]">[−][俯视][二维线框]</div>
        <div className="absolute top-[6px] right-2 flex items-center gap-[7px] text-white">
          <span className="mt-1 h-[2px] w-2 bg-white" />
          <svg viewBox="0 0 8 8" className="size-2" fill="none" stroke="#fff" strokeWidth="1.500">
            <path d="M1 3h4v4H1zM3 2V1h4v4H6" />
          </svg>
          <X size={9} strokeWidth={4} />
        </div>
        <ViewCube />
        <div className="absolute top-[107px] right-[27px] h-[13px] w-[36px] rounded-sm border border-[#989da6] bg-[#848994] pl-[2px] font-['Liberation_Sans',sans-serif] text-[8px] leading-[11px] text-[#e0e3e8]">WCS</div>
        <NavBar />
        <CommandLine />
      </main>
      <StatusBar />
      <button
        type="button"
        aria-label="应用程序菜单"
        className="absolute top-[5px] left-[6px] flex h-[30px] w-[29px] items-center justify-center border border-[#333] bg-linear-to-b from-[#b4b4b4] to-[#6e6e6e]"
      >
        <svg viewBox="0 0 18 20" className="mb-[6px] h-5 w-[18px]">
          <path d="M6 0h6l6 19h-5l-1-4H6l-2 4H0zM8 5l-2 7h5z" fill="#c8262c" fillRule="evenodd" />
          <path d="M0 19L6 0l3 3-5 16z" fill="#e2484a" />
        </svg>
        <Caret />
      </button>
      <SnapMenu />
      <NetMeter />
      <Watermark />
      <ImeBar />
    </div>
  );
}
